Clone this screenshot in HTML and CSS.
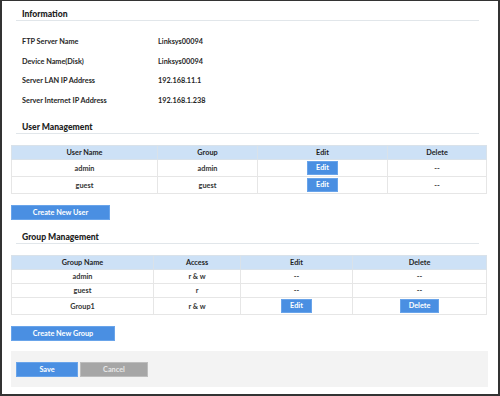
FILE: index.html
```html
<!DOCTYPE html>
<html>
<head>
<meta charset="utf-8">
<link rel="stylesheet" href="styles.css">
</head>
<body>
<div class="panel">
  <div class="sec-title first">Information</div>
  <div class="info">
    <div class="info-row"><span class="lbl">FTP Server Name</span><span class="val">Linksys00094</span></div>
    <div class="info-row"><span class="lbl">Device Name(Disk)</span><span class="val">Linksys00094</span></div>
    <div class="info-row"><span class="lbl">Server LAN IP Address</span><span class="val">192.168.11.1</span></div>
    <div class="info-row"><span class="lbl">Server Internet IP Address</span><span class="val">192.168.1.238</span></div>
  </div>

  <div class="sec-title">User Management</div>
  <table class="grid users">
    <colgroup><col class="c1"><col class="c2"><col class="c3"><col class="c4"></colgroup>
    <thead><tr><th>User Name</th><th>Group</th><th>Edit</th><th>Delete</th></tr></thead>
    <tbody>
      <tr class="btn-row"><td>admin</td><td>admin</td><td><button class="btn edit">Edit</button></td><td>--</td></tr>
      <tr class="btn-row"><td>guest</td><td>guest</td><td><button class="btn edit">Edit</button></td><td>--</td></tr>
    </tbody>
  </table>
  <button class="btn create-user">Create New User</button>

  <div class="sec-title">Group Management</div>
  <table class="grid groups">
    <colgroup><col class="g1"><col class="g2"><col class="g3"><col class="g4"></colgroup>
    <thead><tr><th>Group Name</th><th>Access</th><th>Edit</th><th>Delete</th></tr></thead>
    <tbody>
      <tr><td>admin</td><td>r &amp; w</td><td>--</td><td>--</td></tr>
      <tr><td>guest</td><td>r</td><td>--</td><td>--</td></tr>
      <tr class="btn-row"><td>Group1</td><td>r &amp; w</td><td><button class="btn edit">Edit</button></td><td><button class="btn delete">Delete</button></td></tr>
    </tbody>
  </table>
  <button class="btn create-group">Create New Group</button>

  <div class="footer">
    <button class="btn save">Save</button>
    <button class="btn cancel">Cancel</button>
  </div>
</div>
</body>
</html>
```
FILE: styles.css
```css
html, body {
  margin: 0;
  padding: 0;
  background: #ffffff;
}
.panel {
  box-sizing: border-box;
  width: 500px;
  height: 396px;
  border: 2px solid #333333;
  border-top-width: 1px;
  padding: 0 10px 0 9px;
  font-family: Lato, "Open Sans", sans-serif;
  font-weight: 700;
  font-size: 7.3px;
  color: #262626;
  display: flex;
  flex-direction: column;
  align-items: flex-start;
}
.sec-title {
  align-self: stretch;
  margin: 11px 9px 0 5px;
  padding-left: 6px;
  height: 12px;
  line-height: 12px;
  font-size: 8.6px;
  font-weight: 900;
  border-bottom: 1px solid #e1e6ea;
  color: #222222;
}
.sec-title.first {
  margin-top: 7px;
}
.info {
  padding: 11px 0 0 11px;
  display: flex;
  flex-direction: column;
}
.info-row {
  height: 19.5px;
  line-height: 19.5px;
  display: flex;
}
.lbl {
  width: 136px;
}
.grid {
  margin-top: 11px;
  border-collapse: collapse;
  width: 475px;
  table-layout: fixed;
  text-align: center;
  border: 1px solid #e2e2e2;
}
.grid th, .grid td {
  border: 1px solid #e6e6e6;
  padding: 0;
  height: 13px;
  line-height: 13px;
}
.grid th {
  background: #cde1f6;
  border-color: #d9e2ea;
  color: #1e1e1e;
}
.grid td {
  color: #333333;
}
.grid tr.btn-row td {
  height: 16px;
}
.users .c1 { width: 146px; }
.users .c2 { width: 100px; }
.users .c3 { width: 130px; }
.users .c4 { width: 99px; }
.groups .g1 { width: 142px; }
.groups .g2 { width: 87px; }
.groups .g3 { width: 112px; }
.groups .g4 { width: 134px; }
.btn {
  box-sizing: border-box;
  font-family: Lato, "Open Sans", sans-serif;
  font-weight: 700;
  font-size: 7.3px;
  color: #ffffff;
  background: #4a8fe2;
  border: 1px solid #69a4ea;
  padding: 0;
  margin: 0;
  height: 15px;
  line-height: 13px;
  display: block;
}
.grid .btn {
  display: inline-block;
  vertical-align: middle;
  height: 14px;
  line-height: 12px;
}
.btn.edit { width: 31px; }
.btn.delete { width: 39px; }
.create-user {
  margin-top: 11px;
  width: 99px;
}
.create-group {
  margin-top: 11px;
  width: 104px;
}
.footer {
  align-self: stretch;
  margin-top: 10px;
  height: 36px;
  background: #f3f3f3;
  box-sizing: border-box;
  padding: 11px 0 0 5px;
  display: flex;
  gap: 2px;
  align-items: flex-start;
}
.save { width: 62px; }
.cancel {
  width: 68px;
  background: #a6a6a6;
  border-color: #bdbdbd;
  color: #e6e6e6;
}
```
